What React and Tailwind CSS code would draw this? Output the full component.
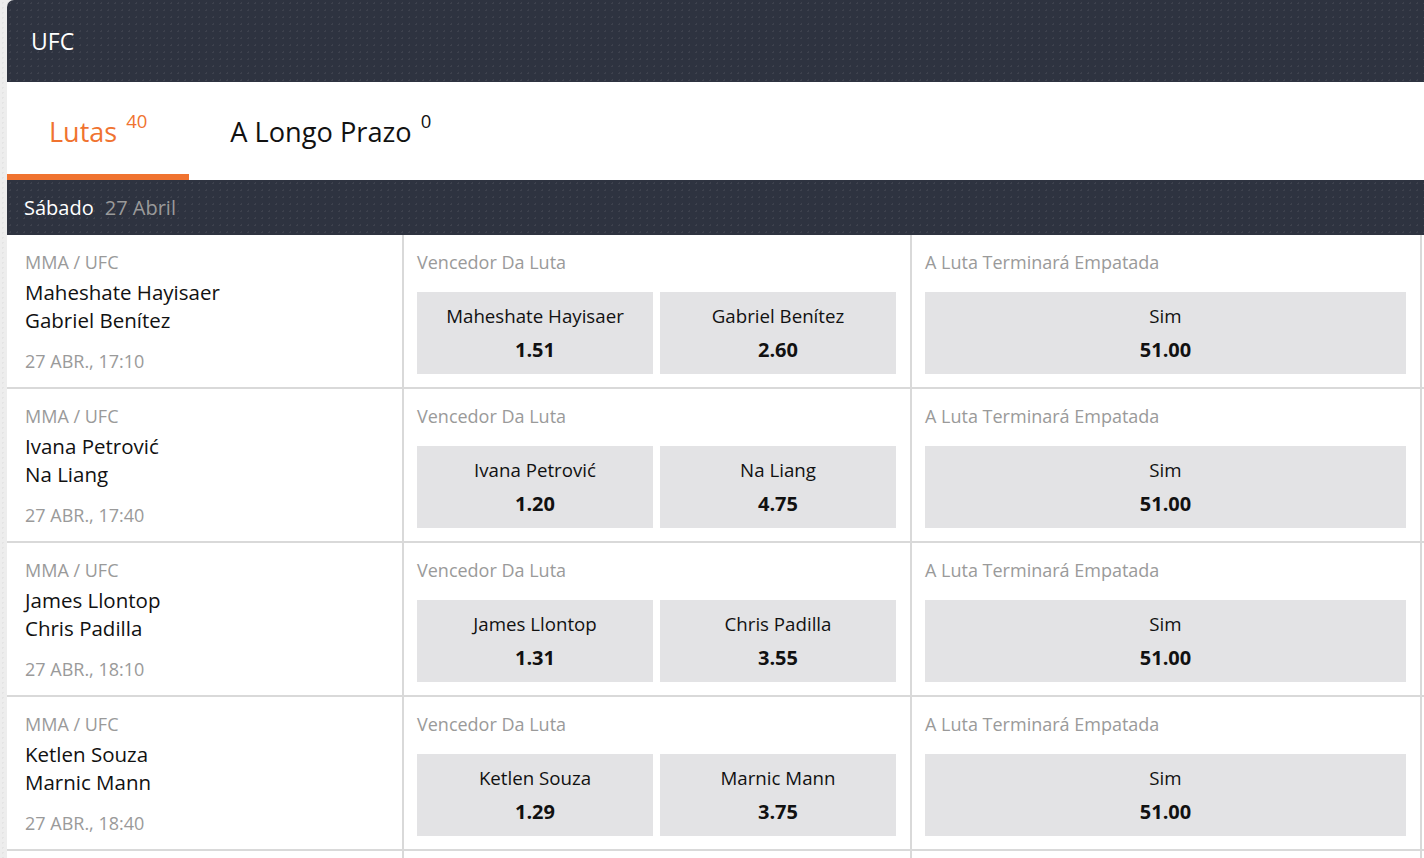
import React from "react";

const fights = [
  { a: "Maheshate Hayisaer", b: "Gabriel Benítez", oa: "1.51", ob: "2.60", time: "27 ABR., 17:10" },
  { a: "Ivana Petrović", b: "Na Liang", oa: "1.20", ob: "4.75", time: "27 ABR., 17:40" },
  { a: "James Llontop", b: "Chris Padilla", oa: "1.31", ob: "3.55", time: "27 ABR., 18:10" },
  { a: "Ketlen Souza", b: "Marnic Mann", oa: "1.29", ob: "3.75", time: "27 ABR., 18:40" },
];

const dots =
  "bg-[#2e3340] bg-[radial-gradient(rgba(255,255,255,0.07)_1px,transparent_1px)] bg-[length:7px_7px]";

function OddButton({ label, odd }) {
  return (
    <div className="h-[82px] bg-[#e3e3e5] pt-[12px] text-center text-[#111]">
      <div className="text-[18.7px] leading-[24px]">{label}</div>
      <div className="mt-[10px] text-[20px] font-bold leading-[24px]">{odd}</div>
    </div>
  );
}

function Cells({ children }) {
  const [c1, c2, c3] = children || [];
  return (
    <div className="flex h-[154px] border-b-2 border-[#d9d9d9]">
      <div className="w-[397px] shrink-0 border-r-2 border-[#d9d9d9] pl-[18px] pt-[16px]">{c1}</div>
      <div className="w-[508px] shrink-0 border-r-2 border-[#d9d9d9] pl-[13px] pr-[14px] pt-[16px]">{c2}</div>
      <div className="w-[510px] shrink-0 border-r-2 border-[#d9d9d9] pl-[13px] pr-[14px] pt-[16px]">{c3}</div>
    </div>
  );
}

function FightRow({ f }) {
  return (
    <Cells>
      {[
        <>
          <div className="text-[18px] leading-[22px] text-[#9a9a9a]">MMA / UFC</div>
          <div className="mt-[5px] text-[20.5px] leading-[28px] text-[#111]">{f.a}</div>
          <div className="text-[20.5px] leading-[28px] text-[#111]">{f.b}</div>
          <div className="mt-[16px] text-[18px] leading-[22px] text-[#9a9a9a]">{f.time}</div>
        </>,
        <>
          <div className="text-[18px] leading-[22px] text-[#9a9a9a]">Vencedor Da Luta</div>
          <div className="mt-[19px] grid grid-cols-2 gap-[7px]">
            <OddButton label={f.a} odd={f.oa} />
            <OddButton label={f.b} odd={f.ob} />
          </div>
        </>,
        <>
          <div className="text-[18px] leading-[22px] text-[#9a9a9a]">A Luta Terminará Empatada</div>
          <div className="mt-[19px]">
            <OddButton label="Sim" odd="51.00" />
          </div>
        </>,
      ]}
    </Cells>
  );
}

export default function App() {
  return (
    <div
      className="h-screen overflow-hidden bg-[#ededed] bg-[radial-gradient(rgba(0,0,0,0.04)_1px,transparent_1px)] bg-[length:5px_5px] pl-[7px]"
      style={{ fontFamily: '"Open Sans", "Noto Sans", sans-serif' }}
    >
      <div className="h-full overflow-hidden rounded-tl-[7px] bg-white">
        <div className={`flex h-[82px] items-center pl-[24px] text-[23px] text-white ${dots}`}>UFC</div>

        <div className="flex h-[98px]">
          <div className="flex items-center border-b-[6px] border-[#f07330] px-[42px] pt-[8px]">
            <span className="text-[27px] text-[#f07330]">Lutas</span>
            <span className="ml-[9px] -mt-[22px] text-[18.5px] text-[#f07330]">40</span>
          </div>
          <div className="flex items-center px-[41px] pt-[2px]">
            <span className="text-[27.2px] text-[#111]">A Longo Prazo</span>
            <span className="ml-[9px] -mt-[22px] text-[18.5px] text-[#111]">0</span>
          </div>
        </div>

        <div className={`flex h-[55px] items-center pl-[17px] text-[20px] ${dots}`}>
          <span className="text-white">Sábado</span>
          <span className="ml-[11px] text-[#9a9a9a]">27 Abril</span>
        </div>

        {fights.map((f) => (
          <FightRow key={f.a} f={f} />
        ))}
        <Cells />
      </div>
    </div>
  );
}
